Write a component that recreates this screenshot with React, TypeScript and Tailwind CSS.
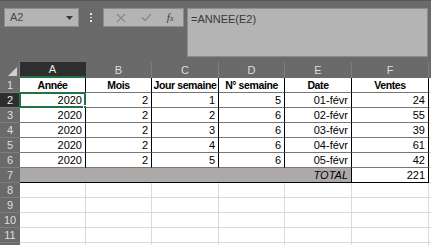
import React from "react";

const cols = ["A", "B", "C", "D", "E", "F"];
const widths = ["w-[66px]", "w-[66px]", "w-[67px]", "w-[66px]", "w-[67px]", "w-[77px]"];

const rows = [
  ["2020", "2", "1", "5", "01-févr", "24"],
  ["2020", "2", "2", "6", "02-févr", "55"],
  ["2020", "2", "3", "6", "03-févr", "39"],
  ["2020", "2", "4", "6", "04-févr", "61"],
  ["2020", "2", "5", "6", "05-févr", "42"],
];

const heads = ["Année", "Mois", "Jour semaine", "N° semaine", "Date", "Ventes"];

function RowHead({ n, active }: { n?: number; active?: boolean }) {
  return (
    <div
      className={
        "w-[20px] shrink-0 h-full flex items-center justify-center border-b border-[#7e7e7e] " +
        (active ? "bg-[#2e2e2e] text-[#e9e9e9]" : "bg-[#6a6a6a] text-[#dedede]")
      }
    >
      {n}
    </div>
  );
}

export default function App() {
  return (
    <div
      className="w-[431px] h-[245px] overflow-hidden bg-[#6a6a6a] text-[11px] leading-none"
      style={{ fontFamily: '"Liberation Sans", Arial, sans-serif' }}
    >
      {/* formula bar area */}
      <div className="h-[62px] flex items-start pt-[7px] pl-[4px] border-t border-[#585858]">
        <div className="w-[75px] h-[19px] bg-[#b4b4b4] border border-[#8c8c8c] flex items-center justify-between pl-[5px] pr-[5px] text-[#404a55]">
          <span>A2</span>
          <svg width="7" height="4" viewBox="0 0 7 4">
            <path d="M0 0h7L3.5 4z" fill="#3a3a3a" />
          </svg>
        </div>
        <div className="w-[24px] h-[19px] flex flex-col items-center justify-center gap-[2px]">
          <div className="w-[1.5px] h-[1.5px] bg-[#e4e4e4]" />
          <div className="w-[1.5px] h-[1.5px] bg-[#e4e4e4]" />
          <div className="w-[1.5px] h-[1.5px] bg-[#e4e4e4]" />
        </div>
        <div className="w-[81px] h-[19px] bg-[#b4b4b4] border border-[#8c8c8c] flex items-center justify-around pl-[4px] pr-[2px]">
          <svg width="10" height="10" viewBox="0 0 10 10">
            <path d="M1 1l8 8M9 1l-8 8" stroke="#8a8a8a" strokeWidth="1.3" />
          </svg>
          <svg width="11" height="9" viewBox="0 0 11 9">
            <path d="M1 4.5l3 3L10 1" stroke="#8a8a8a" strokeWidth="1.4" fill="none" />
          </svg>
          <span
            className="text-[#3a3a3a] italic text-[11px]"
            style={{ fontFamily: '"Liberation Serif", serif' }}
          >
            f<span className="text-[8px]">x</span>
          </span>
        </div>
        <div className="ml-[3px] w-[241px] h-[49px] bg-[#b4b4b4] border border-[#8c8c8c] pl-[3px] pt-[5px] text-[#3a3a3a]">
          =ANNEE(E2)
        </div>
      </div>

      {/* column headers */}
      <div className="flex h-[16px]">
        <div className="w-[20px] shrink-0 h-full bg-[#6a6a6a] relative border-r border-[#7e7e7e]">
          <svg className="absolute right-[2px] bottom-[2px]" width="9" height="9" viewBox="0 0 9 9">
            <path d="M9 0v9H0z" fill="#cfcfcf" />
          </svg>
        </div>
        {cols.map((c, i) => (
          <div
            key={c}
            className={
              widths[i] +
              " shrink-0 h-full flex items-center justify-center border-r " +
              (i === 0
                ? "bg-[#2e2e2e] text-[#e9e9e9] border-[#2e2e2e] border-b-2 border-b-[#217346]"
                : "bg-[#6a6a6a] text-[#dedede] border-[#7e7e7e]")
            }
          >
            {c}
          </div>
        ))}
        <div className="flex-1 bg-[#6a6a6a]" />
      </div>

      {/* row 1 headings */}
      <div className="flex h-[15px]">
        <RowHead n={1} />
        {heads.map((h, i) => (
          <div
            key={h}
            className={widths[i] + " shrink-0 h-full bg-white flex items-center justify-center whitespace-nowrap overflow-hidden font-bold text-[10.5px] tracking-[-0.4px] text-black border-r border-b border-r-black border-b-[#777]"}
          >
            {h}
          </div>
        ))}
        <div className="flex-1 bg-white border-b border-[#d9d9d9]" />
      </div>

      {/* data rows */}
      {rows.map((r, ri) => (
        <div key={ri} className="flex h-[15px]">
          <RowHead n={ri + 2} active={ri === 0} />
          {r.map((v, i) => (
            <div
              key={i}
              className={
                widths[i] +
                " shrink-0 h-full bg-white flex items-center justify-end pr-[3px] text-black border-r border-b border-r-black border-b-[#777] relative"
              }
            >
              {v}
              {ri === 0 && i === 0 && (
                <>
                  <div className="absolute -left-px -top-px -right-px -bottom-px border-2 border-[#217346]" />
                  <div className="absolute -right-[3px] -bottom-[3px] w-[5px] h-[5px] bg-[#217346] border border-white" />
                </>
              )}
            </div>
          ))}
          <div className="flex-1 bg-white border-b border-[#d9d9d9]" />
        </div>
      ))}

      {/* total row */}
      <div className="flex h-[15px]">
        <RowHead n={7} />
        <div className="w-[332px] shrink-0 h-full bg-[#aeaaaa] flex items-center justify-end pr-[3px] italic text-black border-r border-b border-black">
          TOTAL
        </div>
        <div className="w-[77px] shrink-0 h-full bg-white flex items-center justify-end pr-[3px] text-black border-r border-b border-black">
          221
        </div>
        <div className="flex-1 bg-white border-b border-[#d9d9d9]" />
      </div>

      {/* empty rows */}
      {[8, 9, 10, 11, 0].map((n) => (
        <div key={n} className="flex h-[15px]">
          <RowHead n={n || undefined} />
          {widths.map((w, i) => (
            <div key={i} className={w + " shrink-0 h-full bg-white border-r border-b border-[#d9d9d9]"} />
          ))}
          <div className="flex-1 bg-white border-b border-[#d9d9d9]" />
        </div>
      ))}
    </div>
  );
}
